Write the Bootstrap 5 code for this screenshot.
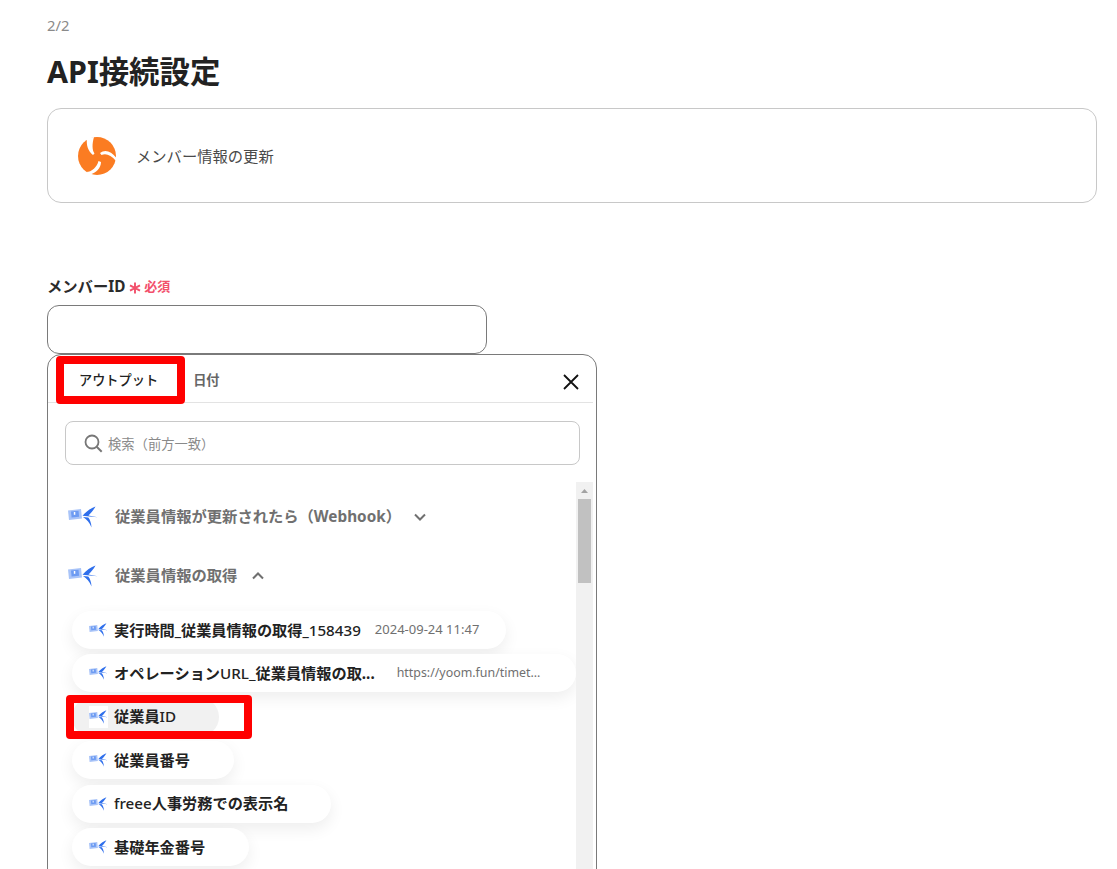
<!DOCTYPE html>
<html lang="ja">
<head>
<meta charset="utf-8">
<title>API接続設定</title>
<link href="https://cdn.jsdelivr.net/npm/bootstrap@5.3.0/dist/css/bootstrap.min.css" rel="stylesheet">
<style>
html,body{height:869px;overflow:hidden;background:#fff}
body{font-family:"Noto Sans","Noto Sans CJK JP",sans-serif;color:#2b2b2b}
.pg{width:1097px;height:869px;overflow:hidden;padding:15px 0 0 47px;position:relative}
.stepno{font-size:14.800px;line-height:20px;color:#8a8a8a}
.ttl{font-size:30.400px;line-height:40px;font-weight:700;margin:17px 0 16px;color:#222}
.actbox{height:95px;border:1px solid #c8c8c8;border-radius:14px;padding-left:29px;gap:19px}
.actbox span{font-size:15.300px;color:#4a4a4a;padding-top:1px}
.fld{margin-top:71px;font-size:15.300px;line-height:24px;font-weight:700;gap:4px}
.req{color:#f2506b;font-size:13px;font-weight:700;gap:3px}
.req svg{margin-top:3px}
.inp{width:440px;height:49px;border:1px solid #7a7a7a;border-radius:12px;margin-top:7px}
.pnl{width:550px;height:600px;border:1px solid #7a7a7a;border-radius:14px;position:relative;padding:0 3px 0 0}
.tabs{height:48px;border-bottom:1px solid #e3e3e3;padding:4px 0 0 31px;gap:35px;font-size:13.200px;font-weight:500}
.tabs .on{color:#222}
.tabs .off{color:#666;font-weight:700}
.clo{position:absolute;right:16px;top:18px}
.srch{margin:18px 13px 17px 17px;height:44px;border:1px solid #c8c8c8;border-radius:8px;padding:0 0 0 18px;gap:5px;font-size:13.300px;color:#8a8a8a}
.srch span{padding-top:3px}
.bdy{height:500px}
.lst{flex:1;min-width:0;padding:5px 0 0 20px}
.grp{height:59px;font-size:15.300px;font-weight:700;color:#707070;gap:17px}
.chv1{margin-left:-5px}
.chv2{margin-left:-3px}
.pills{display:flex;flex-direction:column;gap:5.400px;align-items:flex-start;padding:7px 0 0 4px;margin-top:-1px}
.pil{height:38px;border-radius:19px;background:#fff;box-shadow:0 6px 16px rgba(0,0,0,.07);padding-left:17px;font-size:15.200px;font-weight:700;white-space:nowrap;color:#222}
.pil svg{margin-right:6px;flex:none}
.pil .ltn{font-weight:500}
.pil .val{font-size:13px;font-weight:400;color:#707070;margin-left:14px}
.pil .val2{font-size:12.400px;margin-left:22px}
.pil.sel{background:#f1f1f1;box-shadow:none}
.pil.sel svg{background:#fff}
.w1{width:434px}.w2{width:504px}.w3{width:147px}.w4{width:162px}.w5{width:259px}.w6{width:177px}
.trk{width:17px;background:#f1f1f1;flex:none;position:relative}
.arw{height:17px}
.thb{width:13px;height:84px;margin-left:2px;background:#c1c1c1}
.redb{position:absolute;border:8px solid #f00;border-radius:4px;pointer-events:none}
.r1{left:56px;top:356px;width:129px;height:48px}
.r2{left:66px;top:695px;width:186px;height:44px}
</style>
</head>
<body>
<svg width="0" height="0" class="position-absolute">
<defs>
<symbol id="fr" viewBox="0 0 30 22">
<path d="M0 4.500 13 3l1 9.500L1 14z" fill="#a9c4f8"/>
<path d="M3 5.500l7.500-.7.600 6-7.500.7z" fill="#6d9bf2"/>
<path d="M5.800 6h1.500v2.800H5.800z" fill="#fff"/>
<path d="M27.500 .5C23 2 18 5.500 14.500 9.800l15 1.400-9-1.800C23 7 25.800 3.800 27.500 .5z" fill="#2f6fec"/>
<path d="M15 11c3.800 2.500 6.500 5.500 8.500 10.500-.2-4.500-1.500-7.800-3.200-10z" fill="#2f6fec"/>
</symbol>
</defs>
</svg>
<div class="pg">
<div class="stepno">2/2</div>
<h1 class="ttl">API接続設定</h1>
<div class="actbox d-flex align-items-center">
<svg width="40" height="40" viewBox="0 0 40 40"><circle cx="20" cy="20" r="19" fill="#fb7c22"/><path d="M10 2C9 9 11 15 16 19l1.500-1.500C15 14 15 8 17 1z" fill="#fff"/><path d="M39.500 22C34 15 28 13 23 17l1.500 2C29 17 34 19 39 25z" fill="#fff"/><path d="M9 36C15 36 20 31 21.500 25l2.500 1C24 32 19 37 13 38.500z" fill="#fff"/></svg>
<span>メンバー情報の更新</span>
</div>
<div class="fld d-flex align-items-center">メンバーID
<span class="req d-inline-flex align-items-center"><svg width="12" height="12" viewBox="0 0 12 12"><path d="M6 .5v11M1 3.300l10 5.400M11 3.300 1 8.700" stroke="#f2506b" stroke-width="1.900"/></svg>必須</span></div>
<div class="inp"></div>
<div class="pnl">
<div class="tabs d-flex align-items-center"><span class="on">アウトプット</span><span class="off">日付</span></div>
<svg class="clo" width="18" height="18" viewBox="0 0 18 18"><path d="M2 2l14 14M16 2L2 16" stroke="#111" stroke-width="1.800"/></svg>
<div class="srch d-flex align-items-center"><svg width="19" height="19" viewBox="0 0 19 19"><circle cx="8" cy="8" r="6.500" fill="none" stroke="#777" stroke-width="1.800"/><path d="M12.700 12.700l5 5" stroke="#777" stroke-width="2"/></svg><span>検索（前方一致）</span></div>
<div class="bdy d-flex">
<div class="lst">
<div class="grp d-flex align-items-center"><svg width="30" height="22"><use href="#fr"/></svg><span>従業員情報が更新されたら（Webhook）</span><svg class="chv1" width="14" height="10" viewBox="0 0 14 10"><path d="M2 2.500l5 5 5-5" fill="none" stroke="#707070" stroke-width="2"/></svg></div>
<div class="grp d-flex align-items-center"><svg width="30" height="22"><use href="#fr"/></svg><span>従業員情報の取得</span><svg class="chv2" width="14" height="10" viewBox="0 0 14 10"><path d="M2 7.500l5-5 5 5" fill="none" stroke="#707070" stroke-width="2"/></svg></div>
<div class="pills">
<div class="pil w1 d-flex align-items-center"><svg width="19" height="14"><use href="#fr"/></svg><span>実行時間_従業員情報の取得_<span class="ltn">158439</span></span><span class="val">2024-09-24 11:47</span></div>
<div class="pil w2 d-flex align-items-center"><svg width="19" height="14"><use href="#fr"/></svg><span>オペレーション<span class="ltn">URL_</span>従業員情報の取...</span><span class="val val2">https://yoom.fun/timet...</span></div>
<div class="pil sel w3 d-flex align-items-center"><svg width="19" height="22"><use href="#fr"/></svg><span>従業員<span class="ltn">ID</span></span></div>
<div class="pil w4 d-flex align-items-center"><svg width="19" height="14"><use href="#fr"/></svg><span>従業員番号</span></div>
<div class="pil w5 d-flex align-items-center"><svg width="19" height="14"><use href="#fr"/></svg><span><span class="ltn">freee</span>人事労務での表示名</span></div>
<div class="pil w6 d-flex align-items-center"><svg width="19" height="14"><use href="#fr"/></svg><span>基礎年金番号</span></div>
</div>
</div>
<div class="trk"><div class="arw d-flex justify-content-center align-items-center"><svg width="9" height="6" viewBox="0 0 9 6"><path d="M4.500 1L8 5H1z" fill="#a3a3a3"/></svg></div><div class="thb"></div></div>
</div>
</div>
</div>
<div class="redb r1"></div>
<div class="redb r2"></div>
<script src="https://cdn.jsdelivr.net/npm/bootstrap@5.3.0/dist/js/bootstrap.bundle.min.js"></script>
</body>
</html>
